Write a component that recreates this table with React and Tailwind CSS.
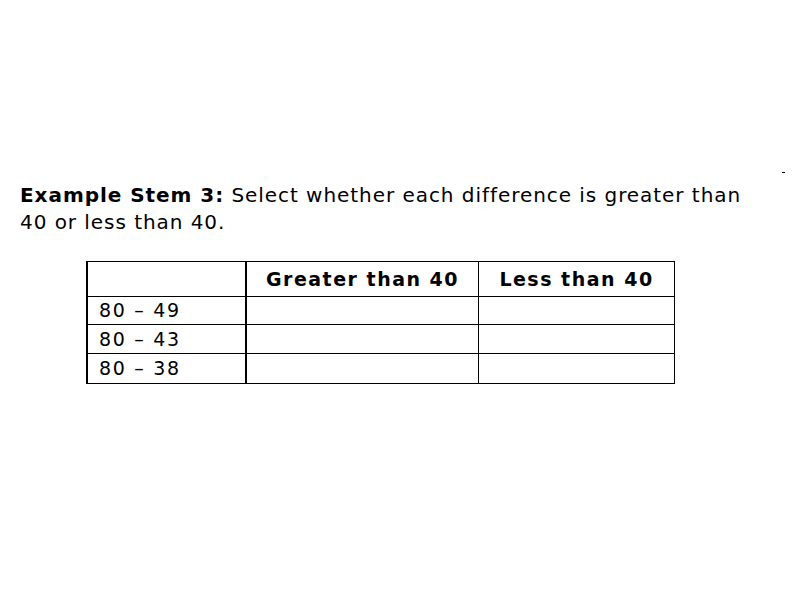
export default function App() {
  const rows = ["80 – 49", "80 – 43", "80 – 38"];
  return (
    <div className="relative w-[800px] h-[600px] bg-white text-black" style={{ fontFamily: '"DejaVu Sans", Verdana, sans-serif' }}>
      <div className="absolute left-[782px] top-[172px] w-[3px] h-px bg-black" />
      <div className="pt-[182px] pl-[20px]">
        <p className="text-[20px] leading-[27px] tracking-[0.95px]">
          <span className="font-bold">Example Stem 3:</span> Select whether each difference is greater than
          <br />
          40 or less than 40.
        </p>
      </div>
      <div className="ml-[86px] mt-[25px] w-[589px] border-t border-r border-b border-l-2 border-black">
        <div className="flex h-[35px] border-b border-black">
          <div className="w-[159px] border-r-2 border-black" />
          <div className="w-[232px] border-r border-black flex items-center justify-center text-[19px] font-bold tracking-[1.5px]">Greater than 40</div>
          <div className="flex-1 flex items-center justify-center text-[19px] font-bold tracking-[1.5px]">Less than 40</div>
        </div>
        {rows.map((r, i) => (
          <div key={r} className={`flex ${i === 0 ? "h-[28px]" : "h-[29px]"} ${i < 2 ? "border-b border-black" : ""}`}>
            <div className="w-[159px] border-r-2 border-black pl-[11px] flex items-center text-[19px] tracking-[1.7px]">{r}</div>
            <div className="w-[232px] border-r border-black" />
            <div className="flex-1" />
          </div>
        ))}
      </div>
    </div>
  );
}
